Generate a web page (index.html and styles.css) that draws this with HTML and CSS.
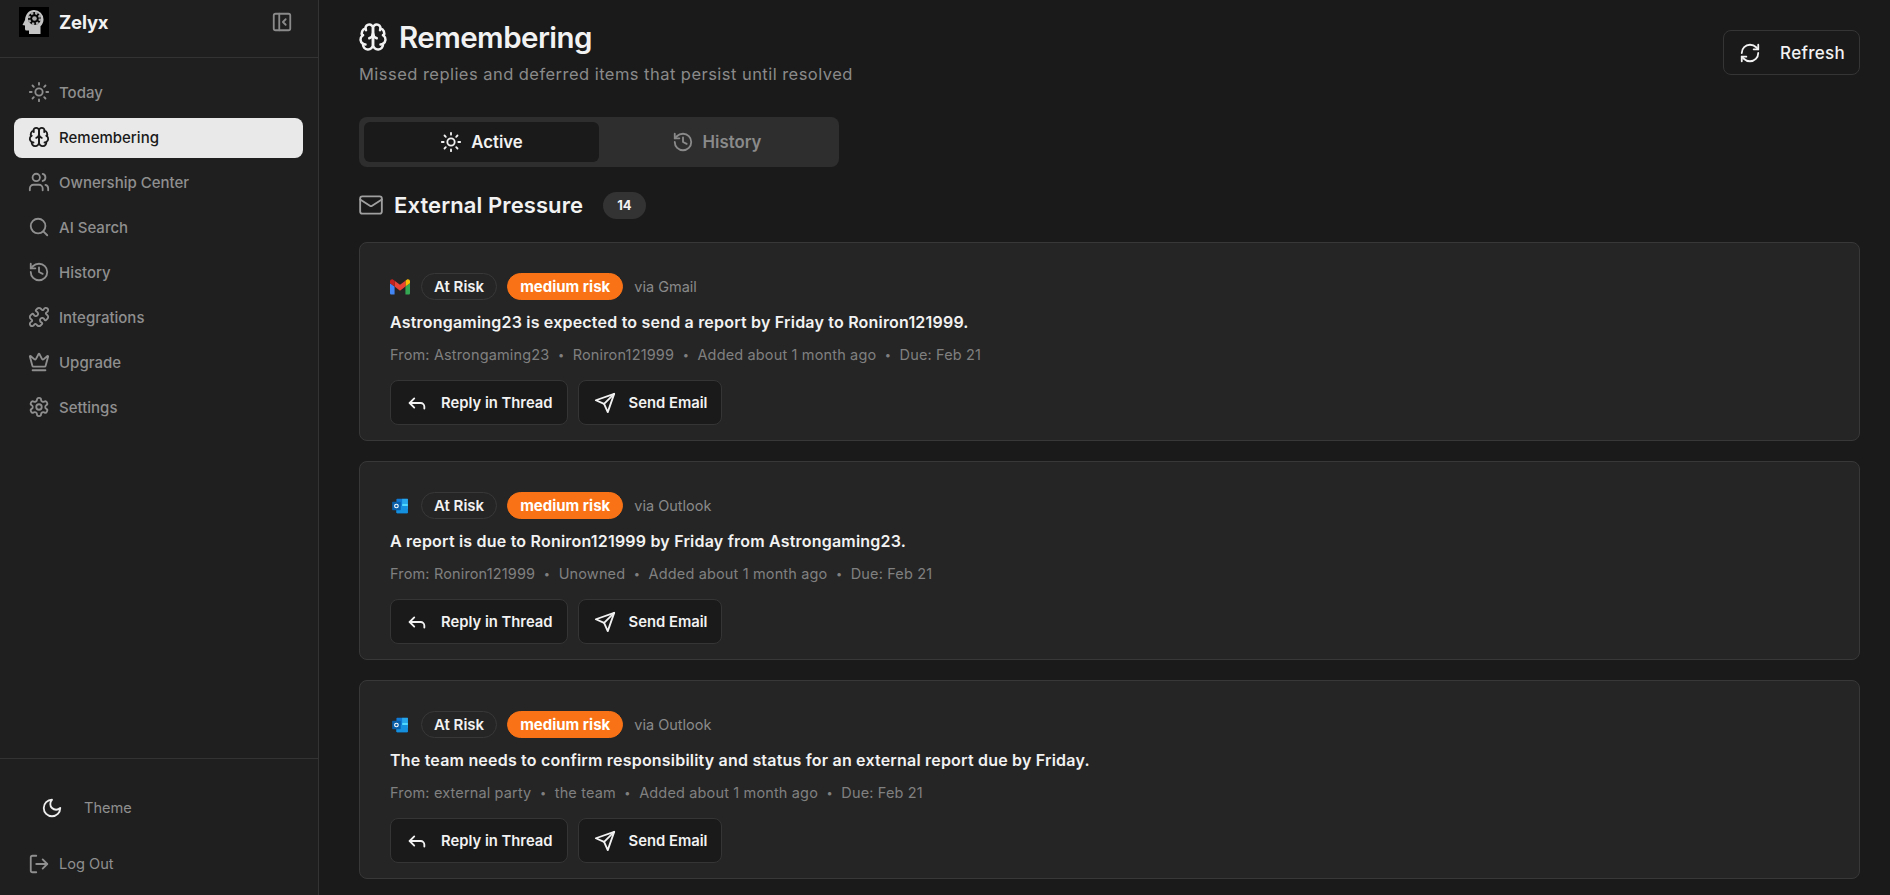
FILE: index.html
```html
<!DOCTYPE html>
<html lang="en">
<head>
    <meta charset="UTF-8">
    <meta name="viewport" content="width=device-width, initial-scale=1.0">
    <title>Zelyx - Remembering</title>
    <link rel="stylesheet" href="styles.css">
</head>
<body>
    <svg class="sprite" xmlns="http://www.w3.org/2000/svg">
        <symbol id="i-sun" viewBox="0 0 24 24"><circle cx="12" cy="12" r="4"/><path d="M12 2v2M12 20v2M4.93 4.93l1.41 1.41M17.66 17.66l1.41 1.41M2 12h2M20 12h2M6.34 17.66l-1.41 1.41M19.07 4.93l-1.41 1.41"/></symbol>
        <symbol id="i-brain" viewBox="0 0 24 24"><path d="M12 5a3 3 0 1 0-5.997.125 4 4 0 0 0-2.526 5.77 4 4 0 0 0 .556 6.588A4 4 0 1 0 12 18Z"/><path d="M12 5a3 3 0 1 1 5.997.125 4 4 0 0 1 2.526 5.77 4 4 0 0 1-.556 6.588A4 4 0 1 1 12 18Z"/><path d="M15 13a4.5 4.5 0 0 1-3-4 4.5 4.5 0 0 1-3 4"/><path d="M17.599 6.5a3 3 0 0 0 .399-1.375"/><path d="M6.003 5.125A3 3 0 0 0 6.401 6.5"/><path d="M3.477 10.896a4 4 0 0 1 .585-.396"/><path d="M19.938 10.5a4 4 0 0 1 .585.396"/><path d="M6 18a4 4 0 0 1-1.967-.516"/><path d="M19.967 17.484A4 4 0 0 1 18 18"/></symbol>
        <symbol id="i-users" viewBox="0 0 24 24"><path d="M16 21v-2a4 4 0 0 0-4-4H6a4 4 0 0 0-4 4v2"/><circle cx="9" cy="7" r="4"/><path d="M22 21v-2a4 4 0 0 0-3-3.87"/><path d="M16 3.13a4 4 0 0 1 0 7.75"/></symbol>
        <symbol id="i-search" viewBox="0 0 24 24"><circle cx="11" cy="11" r="8"/><path d="m21 21-4.3-4.3"/></symbol>
        <symbol id="i-history" viewBox="0 0 24 24"><path d="M3 12a9 9 0 1 0 9-9 9.75 9.75 0 0 0-6.74 2.74L3 8"/><path d="M3 3v5h5"/><path d="M12 7v5l4 2"/></symbol>
        <symbol id="i-puzzle" viewBox="0 0 24 24"><path d="M19.439 7.85c-.049.322.059.648.289.878l1.568 1.568c.47.47.706 1.087.706 1.704s-.235 1.233-.706 1.704l-1.611 1.611a.98.98 0 0 1-.837.276c-.47-.07-.802-.48-.968-.925a2.501 2.501 0 1 0-3.214 3.214c.446.166.855.497.925.968a.979.979 0 0 1-.276.837l-1.61 1.61a2.404 2.404 0 0 1-1.705.707 2.402 2.402 0 0 1-1.704-.706l-1.568-1.568a1.026 1.026 0 0 0-.877-.29c-.493.074-.84.504-1.02.968a2.5 2.5 0 1 1-3.237-3.237c.464-.18.894-.527.967-1.02a1.026 1.026 0 0 0-.289-.877l-1.568-1.568A2.402 2.402 0 0 1 1.998 12c0-.617.236-1.234.706-1.704L4.23 8.77c.24-.24.581-.353.917-.303.515.077.877.528 1.073 1.01a2.5 2.5 0 1 0 3.259-3.259c-.482-.196-.933-.558-1.01-1.073-.05-.336.062-.676.303-.917l1.525-1.525A2.402 2.402 0 0 1 12 1.998c.617 0 1.234.236 1.704.706l1.568 1.568c.23.23.556.338.877.29.493-.074.84-.504 1.02-.968a2.5 2.5 0 1 1 3.237 3.237c-.464.18-.894.527-.967 1.02Z"/></symbol>
        <symbol id="i-crown" viewBox="0 0 24 24"><path d="M11.562 3.266a.5.5 0 0 1 .876 0L15.39 8.87a1 1 0 0 0 1.516.294L21.183 5.5a.5.5 0 0 1 .798.519l-2.834 10.246a1 1 0 0 1-.956.734H5.81a1 1 0 0 1-.957-.734L2.02 6.02a.5.5 0 0 1 .798-.519l4.276 3.664a1 1 0 0 0 1.516-.294z"/><path d="M5 21h14"/></symbol>
        <symbol id="i-settings" viewBox="0 0 24 24"><path d="M12.22 2h-.44a2 2 0 0 0-2 2v.18a2 2 0 0 1-1 1.73l-.43.25a2 2 0 0 1-2 0l-.15-.08a2 2 0 0 0-2.73.73l-.22.38a2 2 0 0 0 .73 2.73l.15.1a2 2 0 0 1 1 1.72v.51a2 2 0 0 1-1 1.74l-.15.09a2 2 0 0 0-.73 2.73l.22.38a2 2 0 0 0 2.73.73l.15-.08a2 2 0 0 1 2 0l.43.25a2 2 0 0 1 1 1.73V20a2 2 0 0 0 2 2h.44a2 2 0 0 0 2-2v-.18a2 2 0 0 1 1-1.73l.43-.25a2 2 0 0 1 2 0l.15.08a2 2 0 0 0 2.73-.73l.22-.39a2 2 0 0 0-.73-2.73l-.15-.08a2 2 0 0 1-1-1.74v-.5a2 2 0 0 1 1-1.74l.15-.09a2 2 0 0 0 .73-2.73l-.22-.38a2 2 0 0 0-2.73-.73l-.15.08a2 2 0 0 1-2 0l-.43-.25a2 2 0 0 1-1-1.73V4a2 2 0 0 0-2-2z"/><circle cx="12" cy="12" r="3"/></symbol>
        <symbol id="i-moon" viewBox="0 0 24 24"><path d="M12 3a6 6 0 0 0 9 9 9 9 0 1 1-9-9Z"/></symbol>
        <symbol id="i-logout" viewBox="0 0 24 24"><path d="M9 21H5a2 2 0 0 1-2-2V5a2 2 0 0 1 2-2h4"/><path d="m16 17 5-5-5-5"/><path d="M21 12H9"/></symbol>
        <symbol id="i-panel" viewBox="0 0 24 24"><rect x="3" y="3" width="18" height="18" rx="2"/><path d="M9 3v18"/><path d="m16 15-3-3 3-3"/></symbol>
        <symbol id="i-refresh" viewBox="0 0 24 24"><path d="M3 12a9 9 0 0 1 9-9 9.75 9.75 0 0 1 6.74 2.74L21 8"/><path d="M21 3v5h-5"/><path d="M21 12a9 9 0 0 1-9 9 9.75 9.75 0 0 1-6.74-2.74L3 16"/><path d="M8 16H3v5"/></symbol>
        <symbol id="i-mail" viewBox="0 0 24 24"><rect x="2" y="4" width="20" height="16" rx="2"/><path d="m22 7-8.97 5.7a1.94 1.94 0 0 1-2.06 0L2 7"/></symbol>
        <symbol id="i-reply" viewBox="0 0 24 24"><path d="M9 17l-5-5 5-5"/><path d="M20 18v-2a4 4 0 0 0-4-4H4"/></symbol>
        <symbol id="i-send" viewBox="0 0 24 24"><path d="m22 2-7 20-4-9-9-4Z"/><path d="M22 2 11 13"/></symbol>
        <symbol id="i-gmail" viewBox="0 0 24 18">
            <path fill="#4285f4" stroke="none" d="M1.6 18H5.5V8.5L0 4.4V16.4C0 17.3.7 18 1.6 18Z"/>
            <path fill="#34a853" stroke="none" d="M18.5 18h3.9c.9 0 1.6-.7 1.6-1.6V4.4L18.500 8.500Z"/>
            <path fill="#fbbc04" stroke="none" d="M18.500 1.400V8.500L24 4.400V2.200C24 .2 21.700-1 20.100.2Z"/>
            <path fill="#ea4335" stroke="none" d="M5.500 8.500V1.400L12 6.300l6.500-4.900V8.500L12 13.400Z"/>
            <path fill="#c5221f" stroke="none" d="M0 2.200V4.400L5.500 8.500V1.400L3.900.2C2.300-1 0 .2 0 2.200Z"/>
        </symbol>
        <symbol id="i-outlook" viewBox="-2 -2 28 28">
            <rect fill="#0f78d4" stroke="none" x="7" y="2" width="16" height="20" rx="1"/>
            <rect fill="#28a8ea" stroke="none" x="15" y="2" width="8" height="7"/>
            <rect fill="#50d9ff" stroke="none" x="15" y="9" width="8" height="7"/>
            <path fill="#1490df" stroke="none" d="M7 12h16v9a1 1 0 0 1-1 1H8a1 1 0 0 1-1-1Z"/>
            <rect fill="#0a5ea8" stroke="none" x="1" y="6" width="12" height="12" rx="1"/>
            <circle fill="none" stroke="#fff" stroke-width="1.600" cx="7" cy="12" r="2.500"/>
        </symbol>
    </svg>

    <div class="app">
        <aside class="sidebar">
            <div class="brand">
                <div class="brand-left">
                    <svg class="logo" viewBox="0 0 30 30">
                        <rect width="30" height="30" fill="#000"/>
                        <path fill="#c4c4c4" d="M15 3a9.500 9.500 0 0 1 9.500 9.500c0 3-1.300 5-3 6.800V27H10v-3.500H7.500a1.500 1.500 0 0 1-1.500-1.500v-3.500l-2.500-.5 2.500-5C6.500 7 10 3 15 3Z"/>
                        <circle cx="15.500" cy="11.500" r="6.500" fill="#000"/>
                        <circle cx="15.500" cy="11.500" r="5.500" fill="none" stroke="#a8a8a8" stroke-width="2.500" stroke-dasharray="2.500 1.800"/>
                        <circle cx="15.500" cy="11.500" r="2.300" fill="#a8a8a8"/>
                    </svg>
                    <span class="brand-name">Zelyx</span>
                </div>
                <svg class="icon icon-panel"><use href="#i-panel"/></svg>
            </div>
            <nav class="nav">
                <a class="nav-item"><svg class="icon"><use href="#i-sun"/></svg>Today</a>
                <a class="nav-item active"><svg class="icon"><use href="#i-brain"/></svg>Remembering</a>
                <a class="nav-item"><svg class="icon"><use href="#i-users"/></svg>Ownership Center</a>
                <a class="nav-item"><svg class="icon"><use href="#i-search"/></svg>AI Search</a>
                <a class="nav-item"><svg class="icon"><use href="#i-history"/></svg>History</a>
                <a class="nav-item"><svg class="icon"><use href="#i-puzzle"/></svg>Integrations</a>
                <a class="nav-item"><svg class="icon"><use href="#i-crown"/></svg>Upgrade</a>
                <a class="nav-item"><svg class="icon"><use href="#i-settings"/></svg>Settings</a>
            </nav>
            <div class="sidebar-foot">
                <a class="theme-item"><svg class="icon icon-moon"><use href="#i-moon"/></svg>Theme</a>
                <a class="nav-item"><svg class="icon"><use href="#i-logout"/></svg>Log Out</a>
            </div>
        </aside>

        <main class="main">
            <header class="page-head">
                <div>
                    <h1><svg class="icon icon-title"><use href="#i-brain"/></svg>Remembering</h1>
                    <p class="subtitle">Missed replies and deferred items that persist until resolved</p>
                </div>
                <button class="btn btn-refresh"><svg class="icon"><use href="#i-refresh"/></svg>Refresh</button>
            </header>

            <div class="tabs">
                <div class="tab selected"><svg class="icon"><use href="#i-sun"/></svg>Active</div>
                <div class="tab"><svg class="icon"><use href="#i-history"/></svg>History</div>
            </div>

            <div class="section-head">
                <svg class="icon icon-mail"><use href="#i-mail"/></svg>
                <h2>External Pressure</h2>
                <span class="count">14</span>
            </div>

            <section class="card">
                <div class="card-tags">
                    <svg class="src"><use href="#i-gmail"/></svg>
                    <span class="tag">At Risk</span>
                    <span class="tag tag-risk">medium risk</span>
                    <span class="via">via Gmail</span>
                </div>
                <p class="card-title">Astrongaming23 is expected to send a report by Friday to Roniron121999.</p>
                <div class="meta"><span>From: Astrongaming23</span><i>•</i><span>Roniron121999</span><i>•</i><span>Added about 1 month ago</span><i>•</i><span>Due: Feb 21</span></div>
                <div class="actions">
                    <button class="btn"><svg class="icon"><use href="#i-reply"/></svg>Reply in Thread</button>
                    <button class="btn"><svg class="icon"><use href="#i-send"/></svg>Send Email</button>
                </div>
            </section>

            <section class="card">
                <div class="card-tags">
                    <svg class="src"><use href="#i-outlook"/></svg>
                    <span class="tag">At Risk</span>
                    <span class="tag tag-risk">medium risk</span>
                    <span class="via">via Outlook</span>
                </div>
                <p class="card-title">A report is due to Roniron121999 by Friday from Astrongaming23.</p>
                <div class="meta"><span>From: Roniron121999</span><i>•</i><span>Unowned</span><i>•</i><span>Added about 1 month ago</span><i>•</i><span>Due: Feb 21</span></div>
                <div class="actions">
                    <button class="btn"><svg class="icon"><use href="#i-reply"/></svg>Reply in Thread</button>
                    <button class="btn"><svg class="icon"><use href="#i-send"/></svg>Send Email</button>
                </div>
            </section>

            <section class="card">
                <div class="card-tags">
                    <svg class="src"><use href="#i-outlook"/></svg>
                    <span class="tag">At Risk</span>
                    <span class="tag tag-risk">medium risk</span>
                    <span class="via">via Outlook</span>
                </div>
                <p class="card-title">The team needs to confirm responsibility and status for an external report due by Friday.</p>
                <div class="meta"><span>From: external party</span><i>•</i><span>the team</span><i>•</i><span>Added about 1 month ago</span><i>•</i><span>Due: Feb 21</span></div>
                <div class="actions">
                    <button class="btn"><svg class="icon"><use href="#i-reply"/></svg>Reply in Thread</button>
                    <button class="btn"><svg class="icon"><use href="#i-send"/></svg>Send Email</button>
                </div>
            </section>
        </main>
    </div>
</body>
</html>
```

FILE: styles.css
```css
* {
    box-sizing: border-box;
}
body {
    margin: 0;
    height: 100vh;
    overflow: hidden;
    background: #1a1a1a;
    color: #f2f2f2;
    font-family: Inter, 'Noto Sans', sans-serif;
}
.sprite {
    display: none;
}
.icon {
    width: 22px;
    height: 22px;
    flex: none;
    fill: none;
    stroke: currentColor;
    stroke-width: 2;
    stroke-linecap: round;
    stroke-linejoin: round;
}
.app {
    display: flex;
    height: 100vh;
}

/* sidebar */
.sidebar {
    width: 319px;
    flex: none;
    display: flex;
    flex-direction: column;
    background: #1f1f1f;
    border-right: 1px solid #333;
}
.brand {
    height: 58px;
    flex: none;
    display: flex;
    align-items: center;
    justify-content: space-between;
    padding: 0 25px 13px 19px;
    border-bottom: 1px solid #333;
}
.brand-left {
    display: flex;
    align-items: center;
    gap: 10px;
}
.logo {
    width: 30px;
    height: 30px;
}
.brand-name {
    font-size: 18.5px;
    font-weight: 700;
    letter-spacing: -0.2px;
}
.icon-panel {
    color: #8a8a8a;
}
.nav {
    flex: 1;
    display: flex;
    flex-direction: column;
    gap: 5px;
    padding: 15px 15px 0 14px;
}
.nav-item {
    height: 40px;
    display: flex;
    align-items: center;
    gap: 9px;
    padding: 0 14px 2px;
    border-radius: 8px;
    color: #8f8f8f;
    font-size: 15px;
    font-weight: 500;
}
.nav-item.active {
    background: #e9e9e9;
    color: #1a1a1a;
}
.sidebar-foot {
    border-top: 1px solid #333;
    padding: 29px 15px 10px 14px;
}
.sidebar-foot .nav-item {
    font-size: 14.6px;
    font-weight: 400;
}
.theme-item {
    height: 40px;
    display: flex;
    align-items: center;
    gap: 21px;
    padding-left: 27px;
    margin-bottom: 17px;
    color: #8f8f8f;
    font-size: 14.6px;
}
.icon-moon {
    color: #eee;
}

/* main column */
.main {
    flex: 1;
    min-width: 0;
    padding: 0 30px 0 40px;
}
.page-head {
    display: flex;
    justify-content: space-between;
    align-items: flex-start;
    height: 117px;
    padding-top: 18px;
}
h1 {
    margin: 0;
    display: flex;
    align-items: center;
    gap: 11px;
    font-size: 29.5px;
    line-height: 38px;
    font-weight: 600;
    letter-spacing: -0.55px;
}
.icon-title {
    width: 30px;
    height: 30px;
    margin-left: -1px;
}
.subtitle {
    margin: 6px 0 0;
    color: #8a8a8a;
    font-size: 16.5px;
    line-height: 24px;
    letter-spacing: 0.46px;
}
.btn {
    height: 45px;
    display: inline-flex;
    align-items: center;
    gap: 13px;
    padding: 0 14px 0 15px;
    background: #1a1a1a;
    border: 1px solid #353535;
    border-radius: 8px;
    color: #f2f2f2;
    font-family: inherit;
    font-size: 14.8px;
    font-weight: 600;
}
.btn-refresh {
    margin-top: 12px;
    gap: 19px;
    font-size: 17px;
    font-weight: 500;
    letter-spacing: 0.3px;
}

.tabs {
    width: 480px;
    height: 50px;
    display: grid;
    grid-template-columns: 1fr 1fr;
    padding: 5px;
    background: #2e2e2e;
    border-radius: 8px;
}
.tab {
    display: flex;
    align-items: center;
    justify-content: center;
    gap: 9px;
    border-radius: 6px;
    color: #8a8a8a;
    font-size: 16.8px;
    font-weight: 600;
}
.tab.selected {
    background: #1a1a1a;
    color: #f2f2f2;
}

.section-head {
    display: flex;
    align-items: center;
    height: 28px;
    margin: 24px 0 23px;
}
.icon-mail {
    width: 26px;
    height: 26px;
    margin-left: -1px;
    color: #a0a0a0;
    stroke-width: 1.700;
}
h2 {
    margin: 0 0 0 10px;
    font-size: 22px;
    font-weight: 600;
    letter-spacing: 0.1px;
}
.count {
    margin-left: 20px;
    padding: 0 14px;
    height: 27px;
    display: flex;
    align-items: center;
    background: #333;
    border-radius: 14px;
    font-size: 13px;
    font-weight: 700;
}

/* cards */
.card {
    height: 199px;
    margin-bottom: 20px;
    padding: 30px 30px 0;
    background: #252525;
    border: 1px solid #383838;
    border-radius: 8px;
}
.card-tags {
    display: flex;
    align-items: center;
    height: 27px;
}
.src {
    width: 20px;
    height: 20px;
    flex: none;
    margin-right: 11px;
}
.tag {
    height: 27px;
    display: flex;
    align-items: center;
    padding: 0 12px;
    border: 1px solid #383838;
    border-radius: 14px;
    font-size: 15px;
    font-weight: 600;
}
.tag-risk {
    margin-left: 10px;
    background: #f97316;
    border-color: #f97316;
    color: #fff;
    font-weight: 700;
}
.via {
    margin-left: 11px;
    color: #8a8a8a;
    font-size: 14.5px;
}
.card-title {
    margin: 10px 0 0;
    font-size: 16px;
    line-height: 24px;
    font-weight: 600;
    letter-spacing: 0.2px;
}
.meta {
    display: flex;
    align-items: center;
    gap: 8.500px;
    margin-top: 11px;
    color: #808080;
    font-size: 14.5px;
    line-height: 20px;
    letter-spacing: 0.15px;
}
.meta i {
    font-style: normal;
    font-size: 11px;
}
.actions {
    display: flex;
    gap: 10px;
    margin-top: 15px;
}
```
